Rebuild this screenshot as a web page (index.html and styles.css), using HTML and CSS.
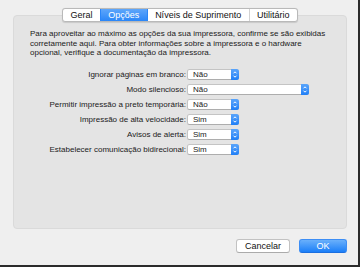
FILE: index.html
```html
<!DOCTYPE html>
<html lang="pt">

<head>
    <meta charset="UTF-8">
    <meta name="viewport" content="width=device-width, initial-scale=1.0">
    <title>Opções da impressora</title>
    <link rel="stylesheet" href="styles.css">
</head>

<body>
    <div class="window">
        <div class="tabs">
            <span class="tab">Geral</span>
            <span class="tab active">Opções</span>
            <span class="tab">Níveis de Suprimento</span>
            <span class="tab">Utilitário</span>
        </div>

        <div class="panel">
            <p class="intro">
                Para aproveitar ao máximo as opções da sua impressora, confirme se são exibidas<br>
                corretamente aqui. Para obter informações sobre a impressora e o hardware<br>
                opcional, verifique a documentação da impressora.
            </p>

            <div class="form">
                <label>Ignorar páginas em branco:</label>
                <div class="popup"><span>Não</span><span class="stepper"><svg viewBox="0 0 8 11" width="8" height="11"><polyline points="2.5,4.3 4,2.8 5.5,4.3"/><polyline points="2.5,6.7 4,8.2 5.5,6.7"/></svg></span></div>

                <label>Modo silencioso:</label>
                <div class="popup wide"><span>Não</span><span class="stepper"><svg viewBox="0 0 8 11" width="8" height="11"><polyline points="2.5,4.3 4,2.8 5.5,4.3"/><polyline points="2.5,6.7 4,8.2 5.5,6.7"/></svg></span></div>

                <label>Permitir impressão a preto temporária:</label>
                <div class="popup"><span>Não</span><span class="stepper"><svg viewBox="0 0 8 11" width="8" height="11"><polyline points="2.5,4.3 4,2.8 5.5,4.3"/><polyline points="2.5,6.7 4,8.2 5.5,6.7"/></svg></span></div>

                <label>Impressão de alta velocidade:</label>
                <div class="popup"><span>Sim</span><span class="stepper"><svg viewBox="0 0 8 11" width="8" height="11"><polyline points="2.5,4.3 4,2.8 5.5,4.3"/><polyline points="2.5,6.7 4,8.2 5.5,6.7"/></svg></span></div>

                <label>Avisos de alerta:</label>
                <div class="popup"><span>Sim</span><span class="stepper"><svg viewBox="0 0 8 11" width="8" height="11"><polyline points="2.5,4.3 4,2.8 5.5,4.3"/><polyline points="2.5,6.7 4,8.2 5.5,6.7"/></svg></span></div>

                <label>Estabelecer comunicação bidirecional:</label>
                <div class="popup"><span>Sim</span><span class="stepper"><svg viewBox="0 0 8 11" width="8" height="11"><polyline points="2.5,4.3 4,2.8 5.5,4.3"/><polyline points="2.5,6.7 4,8.2 5.5,6.7"/></svg></span></div>
            </div>
        </div>

        <div class="footer">
            <button class="btn">Cancelar</button>
            <button class="btn primary">OK</button>
        </div>
    </div>
</body>

</html>
```

FILE: styles.css
```css
body {
    margin: 0;
    padding: 0;
    background-color: #2b2b2b;
    font-family: 'Liberation Sans', Arial, sans-serif;
    color: #1a1a1a;
}

.window {
    box-sizing: border-box;
    width: 358px;
    height: 265px;
    padding: 8px 11px 12px 13px;
    background-color: #efefef;
    display: flex;
    flex-direction: column;
}

/* segmented tabs */
.tabs {
    align-self: center;
    display: flex;
    box-sizing: border-box;
    height: 14px;
    margin-bottom: -7px;
    position: relative;
    z-index: 1;
    background-color: #fff;
    border: 1px solid #b9b9b9;
    border-radius: 3px;
    overflow: hidden;
    box-shadow: 0 0.5px 1px rgba(0, 0, 0, 0.12);
}

.tab {
    padding: 0 7.4px;
    font-size: 9px;
    line-height: 12px;
    color: #111;
    border-left: 1px solid #d2d2d2;
}

.tab:first-child {
    border-left: none;
}

.tab.active {
    background: linear-gradient(#5ea6fa, #2a86f8);
    color: #fff;
    border-left-color: #2a86f8;
}

.tab.active + .tab {
    border-left-color: #2a86f8;
}

/* group box */
.panel {
    flex: 1;
    box-sizing: border-box;
    padding: 13px 16px 0 16px;
    background-color: #e4e4e4;
    border: 1px solid #dadada;
    border-radius: 4px;
}

.intro {
    margin: 0 0 11px 0;
    font-size: 8px;
    line-height: 9.5px;
}

.form {
    display: grid;
    grid-template-columns: 156px auto;
    column-gap: 1px;
    row-gap: 4px;
    justify-items: start;
}

.form label {
    justify-self: end;
    font-size: 8px;
    line-height: 11px;
}

.popup {
    box-sizing: border-box;
    width: 52px;
    height: 11px;
    display: flex;
    justify-content: space-between;
    background-color: #fff;
    border: 1px solid #c4c4c4;
    border-bottom-color: #adadad;
    border-radius: 2.5px;
    font-size: 8px;
    line-height: 9px;
}

.popup.wide {
    width: 122px;
}

.popup span:first-child {
    padding-left: 5px;
}

.stepper {
    width: 8px;
    height: 11px;
    margin: -1px -1px 0 0;
    background: linear-gradient(#5aa5fb, #1f7ff7);
    border-radius: 0 2.5px 2.5px 0;
}

.stepper svg {
    display: block;
}

.stepper polyline {
    fill: none;
    stroke: #fff;
    stroke-width: 1;
}

/* bottom buttons */
.footer {
    display: flex;
    justify-content: flex-end;
    gap: 9px;
    margin-top: 10px;
}

.btn {
    box-sizing: border-box;
    height: 14px;
    padding: 0;
    font-family: 'Liberation Sans', Arial, sans-serif;
    font-size: 9px;
    line-height: 12px;
    color: #111;
    background-color: #fff;
    border: 1px solid #c2c2c2;
    border-bottom-color: #ababab;
    border-radius: 3px;
    width: 54px;
}

.btn.primary {
    width: 48px;
    color: #fff;
    background: linear-gradient(#6ab0fb, #1c7ff8);
    border-color: #3d8ef5;
    border-bottom-color: #1b6fe0;
}
```
